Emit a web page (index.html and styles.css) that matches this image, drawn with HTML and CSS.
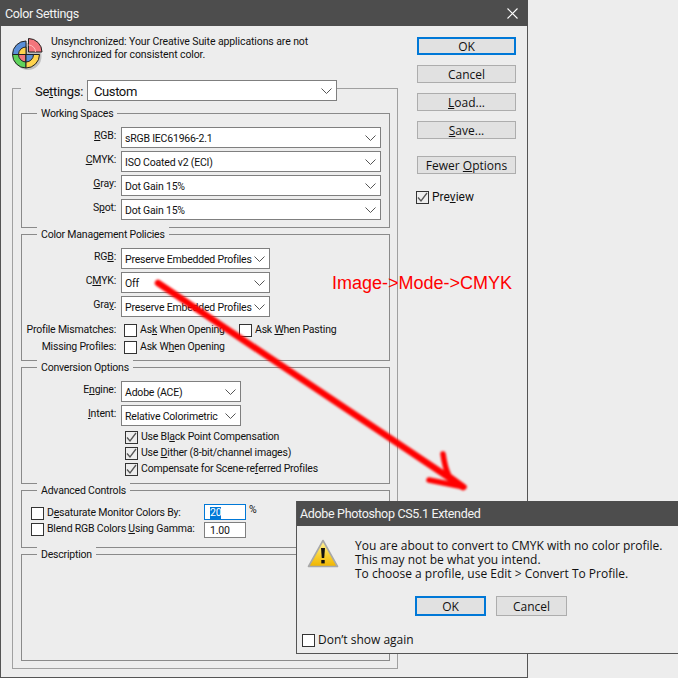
FILE: index.html
```html
<!DOCTYPE html>
<html lang="en">
<head>
<meta charset="utf-8">
<title>Color Settings</title>
<link rel="stylesheet" href="styles.css">
</head>
<body>
<div class="window">
  <div class="titlebar">
    <span class="title">Color Settings</span>
    <svg class="close" width="11" height="11" viewBox="0 0 11 11"><path d="M.5.5l10 10M10.500.5l-10 10" stroke="#fff" stroke-width="1.1" fill="none"/></svg>
  </div>
  <div class="content">
    <div class="main">
      <div class="info">
        <svg class="wheel" width="34" height="34" viewBox="0 0 34 34">
          <circle cx="17" cy="18.500" r="13.500" fill="#8b8b8b" opacity=".45"/>
          <g transform="translate(1 .5)">
          <path d="M14 16V2.500A13.500 13.500 0 0 0 .5 16z" fill="#5a8fd8" stroke="#222"/>
          <path d="M14 16V8.500A7.500 7.500 0 0 0 6.500 16z" fill="#ffd34d" stroke="#222"/>
          <path d="M14 16H.5A13.500 13.500 0 0 0 14 29.500z" fill="#5fd35c" stroke="#222"/>
          <path d="M14 16H6.500A7.500 7.500 0 0 0 14 23.500z" fill="#f2767c" stroke="#222"/>
          <path d="M14 16V29.500A13.500 13.500 0 0 0 27.500 16z" fill="#ffd34d" stroke="#222"/>
          <path d="M14 16V23.500A7.500 7.500 0 0 0 21.500 16z" fill="#5a8fd8" stroke="#222"/>
          </g>
          <path d="M17.500 14V.5A13.500 13.500 0 0 1 31 14z" fill="#f4757c" stroke="#222"/>
          <path d="M17.500 7A7 7 0 0 1 24.500 14" fill="none" stroke="#fbb" stroke-width="1"/>
        </svg>
        <p class="info-text">Unsynchronized: Your Creative Suite applications are not<br>synchronized for consistent color.</p>
      </div>
      <div class="outer">
        <div class="settings">
          <span class="settings-label">Se<u>t</u>tings:</span>
          <div class="select select-settings">Custom<svg class="chev" width="11" height="6" viewBox="0 0 11 6"><path d="M.5.500l5 5 5-5" fill="none" stroke="#555"/></svg></div>
        </div>

        <section class="group group-working">
          <h3 class="legend">Working Spaces</h3>
          <div class="form">
            <label class="lbl"><u>R</u>GB:</label>
            <div class="select w260">sRGB IEC61966-2.1<svg class="chev" width="11" height="6" viewBox="0 0 11 6"><path d="M.5.500l5 5 5-5" fill="none" stroke="#555"/></svg></div>
            <label class="lbl"><u>C</u>MYK:</label>
            <div class="select w260">ISO Coated v2 (ECI)<svg class="chev" width="11" height="6" viewBox="0 0 11 6"><path d="M.5.500l5 5 5-5" fill="none" stroke="#555"/></svg></div>
            <label class="lbl"><u>G</u>ray:</label>
            <div class="select w260">Dot Gain 15%<svg class="chev" width="11" height="6" viewBox="0 0 11 6"><path d="M.5.500l5 5 5-5" fill="none" stroke="#555"/></svg></div>
            <label class="lbl">S<u>p</u>ot:</label>
            <div class="select w260">Dot Gain 15%<svg class="chev" width="11" height="6" viewBox="0 0 11 6"><path d="M.5.500l5 5 5-5" fill="none" stroke="#555"/></svg></div>
          </div>
        </section>

        <section class="group group-policies">
          <h3 class="legend">Color Management Policies</h3>
          <div class="form">
            <label class="lbl">RG<u>B</u>:</label>
            <div class="select w149">Preserve Embedded Profiles<svg class="chev" width="11" height="6" viewBox="0 0 11 6"><path d="M.5.500l5 5 5-5" fill="none" stroke="#555"/></svg></div>
            <label class="lbl">C<u>M</u>YK:</label>
            <div class="select w149">Off<svg class="chev" width="11" height="6" viewBox="0 0 11 6"><path d="M.5.500l5 5 5-5" fill="none" stroke="#555"/></svg></div>
            <label class="lbl">Gra<u>y</u>:</label>
            <div class="select w149">Preserve Embedded Profiles<svg class="chev" width="11" height="6" viewBox="0 0 11 6"><path d="M.5.500l5 5 5-5" fill="none" stroke="#555"/></svg></div>
          </div>
          <div class="checkform">
            <span class="lbl-check">Profile Mismatches:</span>
            <div class="checks">
              <span class="check check-a"><i class="box"></i><span>As<u>k</u> When Opening</span></span>
              <span class="check"><i class="box"></i><span>Ask <u>W</u>hen Pasting</span></span>
            </div>
            <span class="lbl-check">Missing Profiles:</span>
            <div class="checks">
              <span class="check"><i class="box"></i><span>Ask W<u>h</u>en Opening</span></span>
            </div>
          </div>
        </section>

        <section class="group group-conversion">
          <h3 class="legend">Conversion Options</h3>
          <div class="form">
            <label class="lbl">E<u>n</u>gine:</label>
            <div class="select w120">Adobe (ACE)<svg class="chev" width="11" height="6" viewBox="0 0 11 6"><path d="M.5.500l5 5 5-5" fill="none" stroke="#555"/></svg></div>
            <label class="lbl"><u>I</u>ntent:</label>
            <div class="select w120">Relative Colorimetric<svg class="chev" width="11" height="6" viewBox="0 0 11 6"><path d="M.5.500l5 5 5-5" fill="none" stroke="#555"/></svg></div>
          </div>
          <div class="checklist">
            <span class="check"><i class="box box-on"><svg width="11" height="11" viewBox="0 0 11 11"><path d="M1 5.500l3 3.500 6-8" fill="none" stroke="#555" stroke-width="1.300"/></svg></i><span>Use Bl<u>a</u>ck Point Compensation</span></span>
            <span class="check"><i class="box box-on"><svg width="11" height="11" viewBox="0 0 11 11"><path d="M1 5.500l3 3.500 6-8" fill="none" stroke="#555" stroke-width="1.300"/></svg></i><span>Use <u>D</u>ither (8-bit/channel images)</span></span>
            <span class="check"><i class="box box-on"><svg width="11" height="11" viewBox="0 0 11 11"><path d="M1 5.500l3 3.500 6-8" fill="none" stroke="#555" stroke-width="1.300"/></svg></i><span>Compensate for Scene-re<u>f</u>erred Profiles</span></span>
          </div>
        </section>

        <section class="group group-advanced">
          <h3 class="legend">Advanced Controls</h3>
          <div class="advrow">
            <span class="check check-adv check-first"><i class="box"></i><span>D<u>e</u>saturate Monitor Colors By:</span></span>
            <span class="input input-focus"><span class="sel">20</span></span>
            <span class="unit">%</span>
          </div>
          <div class="advrow">
            <span class="check check-adv"><i class="box"></i><span>Blend RGB Colors <u>U</u>sing Gamma:</span></span>
            <span class="input">1.00</span>
          </div>
        </section>

        <section class="group group-description">
          <h3 class="legend">Description</h3>
        </section>
      </div>
    </div>

    <aside class="side">
      <button class="btn btn-default">OK</button>
      <button class="btn">Cancel</button>
      <button class="btn"><u>L</u>oad...</button>
      <button class="btn"><u>S</u>ave...</button>
      <button class="btn btn-more">Fewer <u>O</u>ptions</button>
      <span class="check check-preview"><i class="box box-on"><svg width="11" height="11" viewBox="0 0 11 11"><path d="M1 5.500l3 3.500 6-8" fill="none" stroke="#555" stroke-width="1.300"/></svg></i><span>Pre<u>v</u>iew</span></span>
    </aside>
  </div>
</div>

<svg class="arrow" width="678" height="678" viewBox="0 0 678 678">
  <defs><filter id="soft" x="-5%" y="-5%" width="110%" height="110%"><feGaussianBlur stdDeviation="1"/></filter></defs>
  <g filter="url(#soft)" fill="none" stroke="#ff0000" stroke-linecap="round" stroke-linejoin="round">
    <path d="M158 283L463 487" stroke-width="6.500"/>
    <path d="M443 454Q445 468 449 476L464 487L429 480" stroke-width="5.500"/>
  </g>
</svg>
<div class="annotation">Image-&gt;Mode-&gt;CMYK</div>

<div class="alert">
  <div class="alert-title">Adobe Photoshop CS5.1 Extended</div>
  <div class="alert-body">
    <svg class="warn" width="32" height="30" viewBox="0 0 32 30">
      <defs><linearGradient id="y" x1="0" y1="0" x2="0" y2="1"><stop offset="0" stop-color="#fff3a0"/><stop offset=".6" stop-color="#f8cf2e"/><stop offset="1" stop-color="#f0b400"/></linearGradient></defs>
      <path d="M16 1.500L30.500 27.500H1.500z" fill="url(#y)" stroke="#a8a8a8" stroke-width="1.600" stroke-linejoin="round"/>
      <path d="M14 9h4l-.8 10h-2.400z" fill="#111"/>
      <rect x="14.300" y="21" width="3.400" height="3.400" fill="#111"/>
    </svg>
    <p class="alert-text">You are about to convert to CMYK with no color profile.<br>This may not be what you intend.<br>To choose a profile, use Edit &gt; Convert To Profile.</p>
  </div>
  <div class="alert-actions">
    <button class="btn btn-alert btn-default">OK</button>
    <button class="btn btn-alert">Cancel</button>
  </div>
  <span class="check check-dont"><i class="box box-lg"></i><span>Don’t show again</span></span>
</div>
</body>
</html>
```

FILE: styles.css
```css
* { box-sizing: border-box; }
html, body { margin: 0; width: 678px; height: 678px; overflow: hidden; background: #ededed; }
body { position: relative; font-family: Roboto, "Open Sans", sans-serif; font-size: 10.500px; letter-spacing: -.2px; color: #111; }
u { text-underline-offset: 1px; }

.window { width: 528px; height: 678px; border: 1px solid #555; border-top: 0; background: #ededed; }
.titlebar { height: 26px; margin: 0 -1px; background: #4d4d4d; display: flex; align-items: center; justify-content: space-between; padding: 0 10px 0 5px; color: #f4f4f4; }
.title { font-size: 12.500px; letter-spacing: -.33px; }

.content { display: flex; }
.main { width: 398px; padding-left: 11px; }
.info { display: flex; height: 51px; padding-top: 10px; }
.wheel { margin-top: 2px; margin-left: -1px; flex: none; }
.info-text { margin: 0 0 0 6px; line-height: 12.500px; letter-spacing: -.1px; }

.outer { width: 386px; height: 581px; margin-top: 11px; border: 1px solid #a0a0a0; padding: 0 8px; }
.settings { display: flex; align-items: center; justify-content: flex-end; gap: 4px; height: 21px; width: 316px; margin-top: -9px; background: #ededed; }
.settings-label { font-size: 13px; letter-spacing: -.3px; padding-top: 1px; }
.select { position: relative; height: 21px; border: 1px solid #7f7f7f; background: #fff; padding: 2px 0 0 3px; display: flex; align-items: center; color: #111; white-space: nowrap; }
.select-settings { width: 250px; font-size: 13px; letter-spacing: -.4px; padding: 1px 0 0 6px; }
.w260 { width: 260px; }
.w149 { width: 149px; }
.w120 { width: 120px; }
.chev { position: absolute; right: 4px; top: 7px; }

.group { width: 369px; border: 1px solid #8a8a8a; margin-top: 6px; padding: 0; }
.group-working { margin-top: 12px; height: 115px; }
.group-policies { height: 127px; }
.group-conversion { height: 117px; }
.group-advanced { height: 58px; }
.group-description { height: 107px; }
.legend { margin: -8px 0 0 15px; width: fit-content; height: 14px; line-height: 16px; padding: 0 4px; background: #ededed; font-size: 10.500px; font-weight: 400; }

.form { display: grid; grid-template-columns: 94px auto; column-gap: 5px; row-gap: 3px; justify-content: start; margin-top: 7px; }
.lbl { text-align: right; line-height: 14px; padding-top: 2px; }

.checkform { display: grid; grid-template-columns: 94px auto; column-gap: 8px; row-gap: 3px; margin-top: 6px; justify-content: start; }
.lbl-check { text-align: right; line-height: 14px; white-space: nowrap; }
.checks { display: flex; height: 14px; }
.check { display: flex; align-items: center; gap: 3px; white-space: nowrap; line-height: 14px; }
.check-a { width: 115px; }
.box { display: block; flex: none; width: 13px; height: 13px; border: 1px solid #333; background: #fff; }
.box-on { background: #ededed; }
.box svg { display: block; }

.checklist { display: flex; flex-direction: column; gap: 2px; margin: 4px 0 0 103px; }

.advrow { display: flex; align-items: flex-start; height: 16px; margin-left: 9px; margin-top: 2px; }
.group-advanced .legend { margin-bottom: 7px; }
.check-adv { width: 173px; height: 14px; }
.check-first { margin-top: 2px; }
.input { display: block; width: 42px; height: 16px; border: 1px solid #7f7f7f; background: #fff; padding-left: 5px; line-height: 15px; color: #111; }
.input-focus { border-color: #0078d7; }
.sel { background: #0078d7; color: #fff; display: inline-block; height: 12px; line-height: 12px; }
.unit { margin-left: 3px; line-height: 12px; }

.side { width: 99px; margin-left: 18px; padding-top: 11px; display: flex; flex-direction: column; align-items: flex-start; }
.btn { display: block; width: 99px; height: 18px; margin: 0 0 10px; padding: 0; border: 1px solid #adadad; background: #e1e1e1; color: #111; font: 12px/15px "Open Sans", "Noto Sans", sans-serif; text-align: center; }
.btn-default { border: 2px solid #0078d7; }
.btn-more { margin-top: 7px; margin-bottom: 16px; }
.check-preview { font-size: 12px; letter-spacing: 0; margin-left: -1px; }

.arrow { position: absolute; left: 0; top: 0; pointer-events: none; }
.annotation { position: absolute; left: 332px; top: 272px; color: #f00; font: 18px/22px "Liberation Sans", Arial, sans-serif; letter-spacing: 0; white-space: nowrap; }

.alert { position: absolute; left: 296px; top: 501px; width: 382px; height: 153px; border: 1px solid #555; border-right: 0; background: #ededed; font-family: "Open Sans", sans-serif; font-size: 12px; letter-spacing: 0; }
.alert-title { height: 25px; margin: -1px 0 0; background: #4d4d4d; color: #f4f4f4; padding-left: 3px; line-height: 26px; font-family: Roboto, sans-serif; font-size: 12.500px; letter-spacing: -.33px; }
.alert-body { display: flex; padding: 12px 0 0 10px; }
.warn { flex: none; margin-top: 1px; }
.alert-text { margin: 1px 0 0 16px; line-height: 14px; }
.alert-actions { display: flex; gap: 10px; margin: 15px 0 0 118px; }
.btn-alert { width: 71px; height: 20px; margin: 0; }
.check-dont { margin: 17px 0 0 5px; font-size: 12px; }
.box-lg { width: 13px; height: 13px; }
```
